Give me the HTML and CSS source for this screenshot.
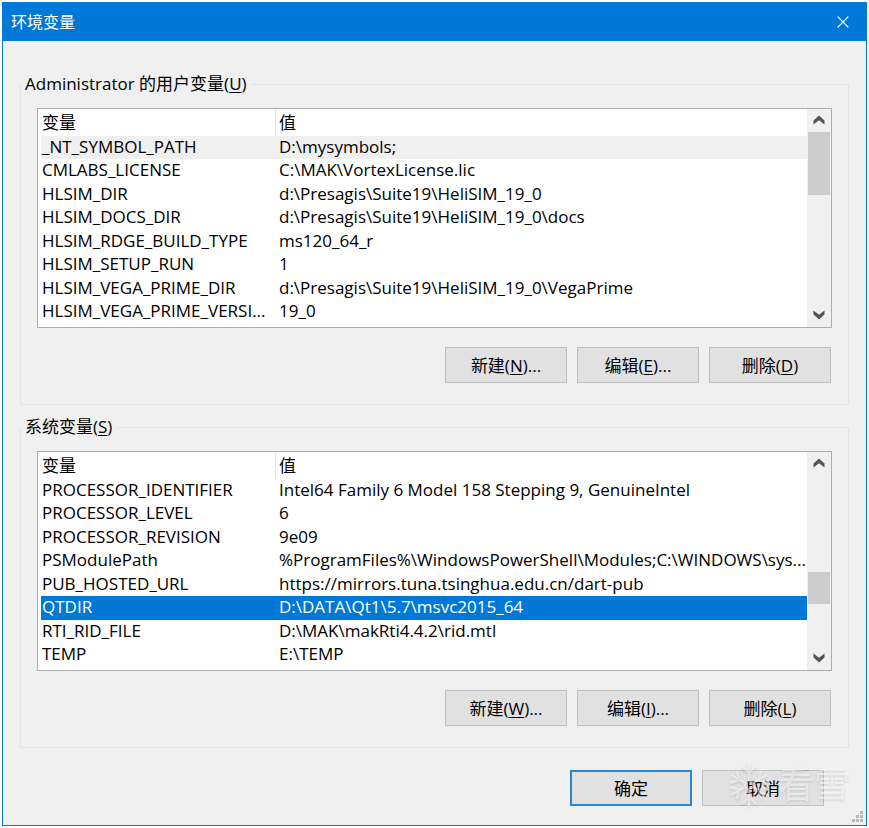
FILE: index.html
```html
<!DOCTYPE html>
<html lang="zh-CN">
<head>
<meta charset="utf-8">
<meta name="viewport" content="width=device-width, initial-scale=1">
<title>环境变量</title>
<link rel="stylesheet" href="styles.css">
</head>
<body>
<main class="window">
  <header class="titlebar">
    <h1 class="title">环境变量</h1>
    <button class="close" type="button" aria-label="关闭">
      <svg width="12" height="12" viewBox="0 0 12 12"><path d="M.7.7l10.600 10.600M11.300.7L.7 11.300" fill="none" stroke="currentColor" stroke-width="1.200"/></svg>
    </button>
  </header>
  <form class="content">
    <fieldset class="group">
      <legend>Administrator 的用户变量(<u>U</u>)</legend>
      <div class="group-body">
        <div class="list">
          <table>
            <thead><tr><th class="name">变量</th><th>值</th></tr></thead>
            <tbody>
              <tr class="current"><td>_NT_SYMBOL_PATH</td><td>D:\mysymbols;</td></tr>
              <tr><td>CMLABS_LICENSE</td><td>C:\MAK\VortexLicense.lic</td></tr>
              <tr><td>HLSIM_DIR</td><td>d:\Presagis\Suite19\HeliSIM_19_0</td></tr>
              <tr><td>HLSIM_DOCS_DIR</td><td>d:\Presagis\Suite19\HeliSIM_19_0\docs</td></tr>
              <tr><td>HLSIM_RDGE_BUILD_TYPE</td><td>ms120_64_r</td></tr>
              <tr><td>HLSIM_SETUP_RUN</td><td>1</td></tr>
              <tr><td>HLSIM_VEGA_PRIME_DIR</td><td>d:\Presagis\Suite19\HeliSIM_19_0\VegaPrime</td></tr>
              <tr><td>HLSIM_VEGA_PRIME_VERSI...</td><td>19_0</td></tr>
            </tbody>
          </table>
          <div class="scrollbar">
            <button class="arrow" type="button" aria-label="向上滚动"><svg width="12" height="10" viewBox="0 0 12 10"><path d="M6 .5l5.500 5v4L6 5.200.5 9.500v-4z" fill="currentColor"/></svg></button>
            <div class="track"><div class="thumb thumb-user"></div></div>
            <button class="arrow" type="button" aria-label="向下滚动"><svg width="12" height="10" viewBox="0 0 12 10"><path d="M6 9.500l5.500-5v-4L6 4.800.5.5v4z" fill="currentColor"/></svg></button>
          </div>
        </div>
        <div class="actions">
          <button class="btn" type="button">新建(<u>N</u>)...</button>
          <button class="btn" type="button">编辑(<u>E</u>)...</button>
          <button class="btn" type="button">删除(<u>D</u>)</button>
        </div>
      </div>
    </fieldset>
    <fieldset class="group">
      <legend>系统变量(<u>S</u>)</legend>
      <div class="group-body">
        <div class="list">
          <table>
            <thead><tr><th class="name">变量</th><th>值</th></tr></thead>
            <tbody>
              <tr><td>PROCESSOR_IDENTIFIER</td><td>Intel64 Family 6 Model 158 Stepping 9, GenuineIntel</td></tr>
              <tr><td>PROCESSOR_LEVEL</td><td>6</td></tr>
              <tr><td>PROCESSOR_REVISION</td><td>9e09</td></tr>
              <tr><td>PSModulePath</td><td>%ProgramFiles%\WindowsPowerShell\Modules;C:\WINDOWS\sys...</td></tr>
              <tr><td>PUB_HOSTED_URL</td><td>https://mirrors.tuna.tsinghua.edu.cn/dart-pub</td></tr>
              <tr class="selected"><td>QTDIR</td><td>D:\DATA\Qt1\5.7\msvc2015_64</td></tr>
              <tr><td>RTI_RID_FILE</td><td>D:\MAK\makRti4.4.2\rid.mtl</td></tr>
              <tr><td>TEMP</td><td>E:\TEMP</td></tr>
            </tbody>
          </table>
          <div class="scrollbar">
            <button class="arrow" type="button" aria-label="向上滚动"><svg width="12" height="10" viewBox="0 0 12 10"><path d="M6 .5l5.500 5v4L6 5.200.5 9.500v-4z" fill="currentColor"/></svg></button>
            <div class="track"><div class="before"></div><div class="thumb thumb-system"></div><div class="after"></div></div>
            <button class="arrow" type="button" aria-label="向下滚动"><svg width="12" height="10" viewBox="0 0 12 10"><path d="M6 9.500l5.500-5v-4L6 4.800.5.5v4z" fill="currentColor"/></svg></button>
          </div>
        </div>
        <div class="actions">
          <button class="btn" type="button">新建(<u>W</u>)...</button>
          <button class="btn" type="button">编辑(<u>I</u>)...</button>
          <button class="btn" type="button">删除(<u>L</u>)</button>
        </div>
      </div>
    </fieldset>
    <div class="footer">
      <button class="btn primary" type="submit">确定</button>
      <button class="btn" type="button">取消</button>
    </div>
  </form>
  <div class="watermark">
    <svg width="44" height="48" viewBox="0 0 44 48" fill="none" stroke="currentColor" stroke-width="2.500">
      <path d="M21 2v17M21 29v17M3 14l14 8M25 26l14 8M3 34l14-8M25 22l14-8M14 5l7 7 7-7M14 43l7-7 7 7M2 22l9-3-2-9M40 22l-9-3 2-9M2 26l9 3-2 9M40 26l-9 3 2 9M21 19l-4 3v4l4 3 4-3v-4z"/>
    </svg>
    <span>看雪</span>
  </div>
  <svg class="grip" width="12" height="12" viewBox="0 0 12 12" fill="currentColor"><path d="M8 0h3v3H8zM8 4h3v3H8zM4 4h3v3H4zM8 8h3v3H8zM4 8h3v3H4zM0 8h3v3H0z"/></svg>
</main>
</body>
</html>
```
FILE: styles.css
```css
* { box-sizing: border-box; }

body {
  margin: 0;
  padding: 2px;
  background: #fff;
  color: #000;
  font: 17px/24px "Open Sans", "Noto Sans CJK SC", sans-serif;
}

button { font: inherit; color: inherit; }

.window {
  position: relative;
  border: 1px solid #0078d7;
  background: #f0f0f0;
}

.titlebar {
  display: flex;
  align-items: center;
  justify-content: space-between;
  height: 38px;
  padding-left: 8px;
  background: #0078d7;
  color: #fff;
}

.title { margin: 0; font-size: 16px; font-weight: 400; }

.close {
  display: grid;
  place-items: center;
  width: 46px;
  height: 38px;
  padding: 0;
  border: 0;
  background: none;
}

.content { padding: 31px 17px 19px; }

.group {
  min-width: 0;
  margin: 0 0 10px;
  padding: 0;
  border: 1px solid #e4e4e4;
}

legend { padding: 0 4px; }

.group-body { padding: 12px 16px 21px; }

.list {
  display: flex;
  padding-left: 3px;
  border: 1px solid #abadb3;
  background: #fff;
}

table {
  flex: 1;
  min-width: 0;
  width: 0;
  margin-bottom: 3px;
  border-collapse: separate;
  border-spacing: 0;
  table-layout: fixed;
}

th, td {
  height: 23px;
  padding: 0 0 0 3px;
  overflow: hidden;
  font-weight: 400;
  line-height: 21px;
  text-align: left;
  vertical-align: top;
  white-space: nowrap;
}

tr :first-child { padding-left: 1px; }
tbody tr:nth-child(even) td { height: 24px; }
th { height: 27px; line-height: 27px; }
.name { width: 235px; border-right: 1px solid #e5e5e5; }
.current { background: #f0f0f0; }
.selected { background: #0078d7; color: #fff; }

.scrollbar {
  display: flex;
  flex-direction: column;
  width: 24px;
  padding: 0 1px;
  background: #f0f0f0;
}

.arrow {
  display: grid;
  place-items: center;
  height: 23px;
  padding: 0 1px 2px 0;
  border: 0;
  background: none;
  color: #555;
}

.track { display: flex; flex: 1; flex-direction: column; }
.thumb { background: #cdcdcd; }
.thumb-user { height: 63px; }
.thumb-system { height: 32px; }
.before { flex: 9; }
.after { flex: 4; }

.actions, .footer { display: flex; justify-content: flex-end; gap: 10px; }
.actions { margin-top: 19px; padding-right: 1px; }
.footer { margin-top: 22px; padding-right: 25px; }

.btn {
  width: 122px;
  height: 36px;
  padding: 2px 0 0;
  border: 1px solid #bfbfbf;
  background: #e1e1e1;
}

.primary { border: 2px solid #2a86d8; }
u { text-underline-offset: 2px; }

.watermark {
  position: absolute;
  right: 16px;
  bottom: 16px;
  display: flex;
  align-items: center;
  gap: 6px;
  color: rgb(255 255 255 / 50%);
  font-size: 36px;
  line-height: 48px;
  filter: drop-shadow(0 1px 1px rgb(0 0 0 / 25%));
  pointer-events: none;
}

.grip {
  position: absolute;
  right: 2px;
  bottom: 2px;
  color: #b8b8b8;
}
```
